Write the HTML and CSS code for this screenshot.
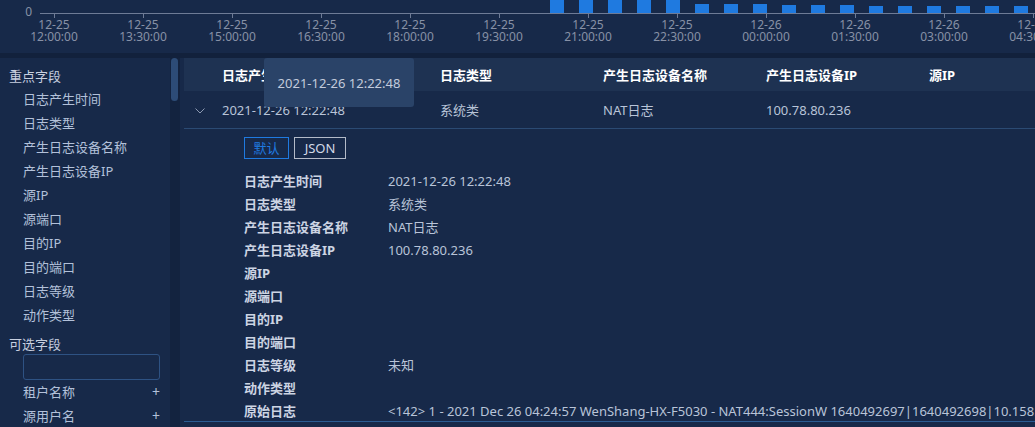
FILE: index.html
```html
<!DOCTYPE html>
<html lang="zh">
<head>
	<meta charset="utf-8" />
	<title>日志检索</title>
	<link rel="stylesheet" href="styles.css">
</head>
<body>
	<div class="chart">
		<svg width="1035" height="53" viewBox="0 0 1035 53">
			<text class="ylabel" x="32" y="16" text-anchor="end">0</text>
			<g class="bars">
				<rect x="550" y="0" width="14" height="13"/>
				<rect x="579" y="0" width="14" height="13"/>
				<rect x="608" y="0" width="14" height="13"/>
				<rect x="637" y="0" width="14" height="13"/>
				<rect x="666" y="0" width="14" height="13"/>
				<rect x="695" y="4" width="14" height="9"/>
				<rect x="724" y="4" width="14" height="9"/>
				<rect x="753" y="4" width="14" height="9"/>
				<rect x="782" y="5" width="14" height="8"/>
				<rect x="811" y="5" width="14" height="8"/>
				<rect x="840" y="5" width="14" height="8"/>
				<rect x="869" y="6" width="14" height="7"/>
				<rect x="898" y="6" width="14" height="7"/>
				<rect x="927" y="6" width="14" height="7"/>
				<rect x="956" y="6" width="14" height="7"/>
				<rect x="985" y="6" width="14" height="7"/>
				<rect x="1014" y="6" width="14" height="7"/>
			</g>
			<line class="axis" x1="40" y1="13.5" x2="1035" y2="13.5"/>
			<g class="ticks">
				<line x1="54.5" y1="13" x2="54.5" y2="18"/>
				<line x1="143.5" y1="13" x2="143.5" y2="18"/>
				<line x1="232.5" y1="13" x2="232.5" y2="18"/>
				<line x1="321.5" y1="13" x2="321.5" y2="18"/>
				<line x1="410.5" y1="13" x2="410.5" y2="18"/>
				<line x1="499.5" y1="13" x2="499.5" y2="18"/>
				<line x1="588.5" y1="13" x2="588.5" y2="18"/>
				<line x1="677.5" y1="13" x2="677.5" y2="18"/>
				<line x1="766.5" y1="13" x2="766.5" y2="18"/>
				<line x1="855.5" y1="13" x2="855.5" y2="18"/>
				<line x1="944.5" y1="13" x2="944.5" y2="18"/>
				<line x1="1033.5" y1="13" x2="1033.5" y2="18"/>
			</g>
			<g class="xlabels" text-anchor="middle">
				<text x="54" y="29">12-25</text><text x="54" y="41">12:00:00</text>
				<text x="143" y="29">12-25</text><text x="143" y="41">13:30:00</text>
				<text x="232" y="29">12-25</text><text x="232" y="41">15:00:00</text>
				<text x="321" y="29">12-25</text><text x="321" y="41">16:30:00</text>
				<text x="410" y="29">12-25</text><text x="410" y="41">18:00:00</text>
				<text x="499" y="29">12-25</text><text x="499" y="41">19:30:00</text>
				<text x="588" y="29">12-25</text><text x="588" y="41">21:00:00</text>
				<text x="677" y="29">12-25</text><text x="677" y="41">22:30:00</text>
				<text x="766" y="29">12-26</text><text x="766" y="41">00:00:00</text>
				<text x="855" y="29">12-26</text><text x="855" y="41">01:30:00</text>
				<text x="944" y="29">12-26</text><text x="944" y="41">03:00:00</text>
				<text x="1033" y="29">12-26</text><text x="1033" y="41">04:30:00</text>
			</g>
		</svg>
	</div>
	<div class="band"></div>
	<div class="main">
		<div class="sidebar">
			<div class="group-title">重点字段</div>
			<ul class="field-list">
				<li>日志产生时间</li>
				<li>日志类型</li>
				<li>产生日志设备名称</li>
				<li>产生日志设备IP</li>
				<li>源IP</li>
				<li>源端口</li>
				<li>目的IP</li>
				<li>目的端口</li>
				<li>日志等级</li>
				<li>动作类型</li>
			</ul>
			<div class="group-title optional">可选字段</div>
			<input class="field-search" type="text">
			<ul class="field-list">
				<li><span>租户名称</span><span class="add">+</span></li>
				<li><span>源用户名</span><span class="add">+</span></li>
			</ul>
		</div>
		<div class="scrollbar"><div class="thumb"></div></div>
		<div class="content">
			<div class="table">
				<div class="thead">
					<div></div>
					<div>日志产生时间</div>
					<div>日志类型</div>
					<div>产生日志设备名称</div>
					<div>产生日志设备IP</div>
					<div>源IP</div>
				</div>
				<div class="trow">
					<div class="chevron">
						<svg width="10" height="6" viewBox="0 0 10 6"><path d="M0.5 0.5 L5 5 L9.5 0.5" fill="none" stroke="#8d9ab2" stroke-width="1"/></svg>
					</div>
					<div>2021-12-26 12:22:48</div>
					<div>系统类</div>
					<div>NAT日志</div>
					<div>100.78.80.236</div>
					<div></div>
				</div>
				<div class="detail">
					<div class="tabs">
						<button class="tab active">默认</button>
						<button class="tab">JSON</button>
					</div>
					<dl class="kv">
						<div><dt>日志产生时间</dt><dd>2021-12-26 12:22:48</dd></div>
						<div><dt>日志类型</dt><dd>系统类</dd></div>
						<div><dt>产生日志设备名称</dt><dd>NAT日志</dd></div>
						<div><dt>产生日志设备IP</dt><dd>100.78.80.236</dd></div>
						<div><dt>源IP</dt><dd></dd></div>
						<div><dt>源端口</dt><dd></dd></div>
						<div><dt>目的IP</dt><dd></dd></div>
						<div><dt>目的端口</dt><dd></dd></div>
						<div><dt>日志等级</dt><dd>未知</dd></div>
						<div><dt>动作类型</dt><dd></dd></div>
						<div><dt>原始日志</dt><dd>&lt;142&gt; 1 - 2021 Dec 26 04:24:57 WenShang-HX-F5030 - NAT444:SessionW 1640492697<span class="pipe">|</span>1640492698<span class="pipe">|</span>10.158.161.23<span class="pipe">|</span>35120</dd></div>
					</dl>
				</div>
			</div>
			<div class="tooltip">2021-12-26 12:22:48</div>
		</div>
	</div>
</body>
</html>
```

FILE: styles.css
```css
html {
	box-sizing: border-box;
	font-family: "Noto Sans", "Noto Sans CJK SC", sans-serif;
	font-size: 13px;
}

*, *:before, *:after {
	box-sizing: inherit;
}

body {
	margin: 0;
	padding: 0;
	width: 1035px;
	height: 427px;
	overflow: hidden;
	background-color: #172949;
	color: #b9c4d8;
}

/* chart */
.chart {
	height: 53px;
	background-color: #172949;
}

.chart svg {
	display: block;
}

.chart .bars rect {
	fill: #1f7ae0;
}

.chart .axis,
.chart .ticks line {
	stroke: #6e7b96;
	stroke-width: 1;
}

.chart text {
	fill: #8791a6;
	font-family: "Noto Sans", sans-serif;
	font-size: 12px;
}

.band {
	height: 5px;
	background-color: #12213c;
}

/* layout */
.main {
	display: flex;
	height: 369px;
}

.sidebar {
	width: 170px;
	padding-top: 8px;
	overflow: hidden;
}

.scrollbar {
	width: 10px;
	background-color: #13233f;
	padding-left: 1px;
}

.scrollbar .thumb {
	width: 7px;
	height: 43px;
	border-radius: 4px;
	background-color: #2d4c77;
}

.content {
	flex: 1;
	position: relative;
	padding-left: 4px;
	overflow: hidden;
}

/* sidebar */
.group-title {
	padding-left: 9px;
	line-height: 21px;
	color: #c8d0e0;
}

.group-title.optional {
	margin-top: 8px;
	line-height: 18px;
}

.field-list {
	list-style: none;
	margin: 0;
	padding: 0 10px 0 23px;
}

.field-list li {
	display: flex;
	justify-content: space-between;
	line-height: 24px;
	color: #b3c1da;
}

.field-list .add {
	font-size: 14px;
	color: #b3c1da;
}

.field-search {
	display: block;
	margin: 1px 0 0 23px;
	width: 137px;
	height: 26px;
	border: 1px solid #2e5283;
	border-radius: 3px;
	background-color: transparent;
	outline: none;
}

/* table */
.thead,
.trow {
	display: grid;
	grid-template-columns: 38px 218px 163px 163px 163px 1fr;
	align-items: center;
	white-space: nowrap;
}

.thead {
	height: 33px;
	background-color: #1e3252;
	font-weight: bold;
	color: #ffffff;
}

.trow {
	height: 38px;
	border-bottom: 1px solid #2b4a73;
}

.chevron {
	padding-left: 11px;
	padding-top: 3px;
}

.chevron svg {
	display: block;
}

.detail {
	padding: 8px 0 0 60px;
	border-bottom: 1px solid #2b5c93;
}

.tabs {
	display: flex;
	gap: 5px;
}

.tab {
	width: 52px;
	height: 22px;
	padding: 0;
	text-align: center;
	background-color: transparent;
	border: 1px solid #b3bac8;
	color: #d3dae8;
	font-family: inherit;
	font-size: 13px;
	line-height: 20px;
	cursor: pointer;
}

.tab.active {
	width: 45px;
	border-color: #1f7ae0;
	color: #1f7ae0;
}

.kv {
	margin: 12px 0 0 0;
	padding: 0;
	display: flex;
	flex-direction: column;
	gap: 3px;
}

.kv div {
	display: flex;
	line-height: 20px;
	white-space: nowrap;
}

.kv dt {
	width: 144px;
	flex-shrink: 0;
	font-weight: bold;
	color: #ccd4e3;
}

.kv dd {
	margin: 0;
	color: #b9c4d8;
}

.kv .pipe {
	letter-spacing: -3px;
	margin-right: 3px;
}

/* tooltip over the header */
.tooltip {
	position: absolute;
	left: 84px;
	top: 0;
	width: 150px;
	height: 49px;
	line-height: 50px;
	text-align: center;
	border-radius: 3px;
	background-color: #2a4368;
	color: #c3cbdc;
}
```
